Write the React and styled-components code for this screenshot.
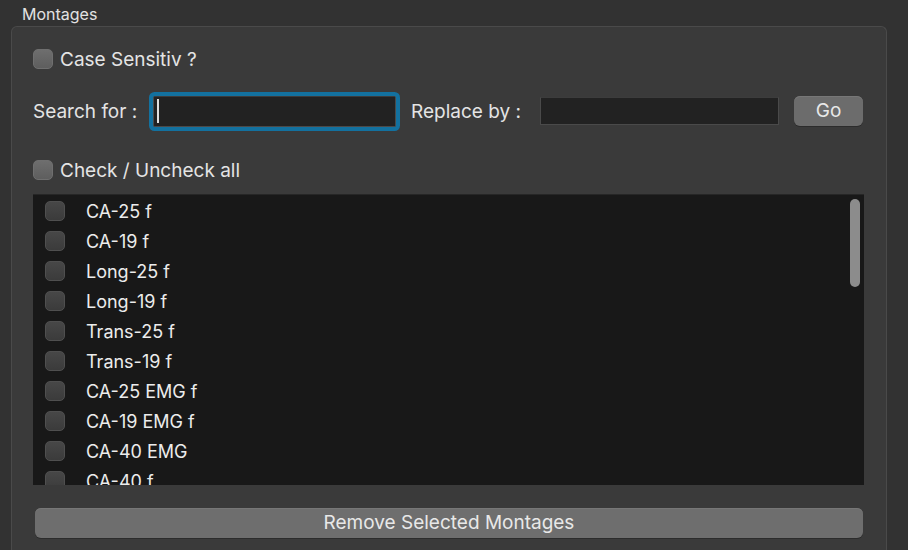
import React from "react";
import styled, { createGlobalStyle } from "styled-components";

const Global = createGlobalStyle`
  html, body {
    margin: 0;
    padding: 0;
    width: 908px;
    height: 550px;
    overflow: hidden;
    background: #323232;
  }
  body {
    font-family: Inter, "Noto Sans", "Liberation Sans", sans-serif;
    color: #e6e6e6;
    -webkit-font-smoothing: antialiased;
  }
`;

const Page = styled.div`
  display: flex;
  flex-direction: column;
  padding: 5px 21px 0 11px;
  height: 550px;
  box-sizing: border-box;
`;

const Title = styled.div`
  font-size: 16px;
  line-height: 18px;
  color: #e2e2e2;
  padding-left: 11px;
  margin-bottom: 3px;
`;

const Group = styled.div`
  flex: 1;
  display: flex;
  flex-direction: column;
  background: #3a3a3a;
  border: 1px solid #4a4a4a;
  border-bottom: none;
  border-radius: 6px 6px 0 0;
  padding: 22px 22px 0 21px;
`;

const CheckRow = styled.label`
  display: flex;
  align-items: center;
  gap: 7px;
  height: 20px;
  margin-top: ${(p) => p.$mt || 0}px;
  font-size: 19px;
  color: #e4e4e4;
`;

const Box = styled.span`
  display: inline-block;
  width: 20px;
  height: 20px;
  box-sizing: border-box;
  border-radius: 5px;
  background: ${(p) =>
    p.$dark
      ? "linear-gradient(#474747, #3b3b3b)"
      : "linear-gradient(#6e6e6e, #5e5e5e)"};
  border: 1px solid ${(p) => (p.$dark ? "#4f4f4f" : "#6f6f6f")};
  flex-shrink: 0;
`;

const SearchRow = styled.div`
  display: flex;
  align-items: center;
  margin-top: 24px;
  height: 36px;
`;

const FieldLabel = styled.span`
  font-size: 19px;
  color: #e4e4e4;
  width: ${(p) => p.$w}px;
  margin-left: ${(p) => p.$ml || 0}px;
  flex-shrink: 0;
  white-space: nowrap;
`;

const Field = styled.div`
  width: ${(p) => p.$w}px;
  height: ${(p) => p.$h}px;
  box-sizing: border-box;
  background: #222222;
  border: 1px solid #4a4a4a;
  border-top-color: #3c3c3c;
  flex-shrink: 0;
  display: flex;
  align-items: center;
  padding-left: 3px;
  ${(p) =>
    p.$focus &&
    `
    border-radius: 2px;
    box-shadow: 0 0 0 4px #13719f;
  `}
`;

const Caret = styled.span`
  width: 2px;
  height: 24px;
  background: #e0e0e0;
`;

const Button = styled.button`
  font-family: inherit;
  font-size: 19px;
  line-height: 22px;
  color: #e8e8e8;
  background: #6c6c6c;
  border: none;
  border-radius: 6px;
  box-shadow: 0 1px 0 #2c2c2c, inset 0 1px 0 #777;
  height: 30px;
  padding: 0;
  flex-shrink: 0;
`;

const GoButton = styled(Button)`
  width: 69px;
  margin-left: 15px;
`;

const RemoveButton = styled(Button)`
  margin: 23px 1px 0 2px;
  background: #6e6e6e;
`;

const List = styled.div`
  position: relative;
  margin-top: 14px;
  height: 291px;
  background: #181818;
  border-top: 1px solid #262626;
  box-sizing: border-box;
  overflow: hidden;
  padding-top: 1px;
`;

const Row = styled.div`
  display: flex;
  align-items: center;
  height: 30px;
  padding-left: 12px;
  gap: 21px;
  font-size: 18px;
  color: #ececec;
`;

const Thumb = styled.div`
  position: absolute;
  right: 4px;
  top: 4px;
  width: 10px;
  height: 88px;
  border-radius: 5px;
  background: #8c8c8c;
`;

const items = [
  "CA-25 f",
  "CA-19 f",
  "Long-25 f",
  "Long-19 f",
  "Trans-25 f",
  "Trans-19 f",
  "CA-25 EMG f",
  "CA-19 EMG f",
  "CA-40 EMG",
  "CA-40 f",
];

export default function App() {
  return (
    <>
      <Global />
      <Page>
        <Title>Montages</Title>
        <Group>
          <CheckRow>
            <Box />
            Case Sensitiv ?
          </CheckRow>
          <SearchRow>
            <FieldLabel $w={120}>Search for :</FieldLabel>
            <Field $w={243} $h={31} $focus>
              <Caret />
            </Field>
            <FieldLabel $w={129} $ml={15}>
              Replace by :
            </FieldLabel>
            <Field $w={239} $h={28} />
            <GoButton>Go</GoButton>
          </SearchRow>
          <CheckRow $mt={31}>
            <Box />
            Check / Uncheck all
          </CheckRow>
          <List>
            {items.map((t) => (
              <Row key={t}>
                <Box $dark />
                {t}
              </Row>
            ))}
            <Thumb />
          </List>
          <RemoveButton>Remove Selected Montages</RemoveButton>
        </Group>
      </Page>
    </>
  );
}
